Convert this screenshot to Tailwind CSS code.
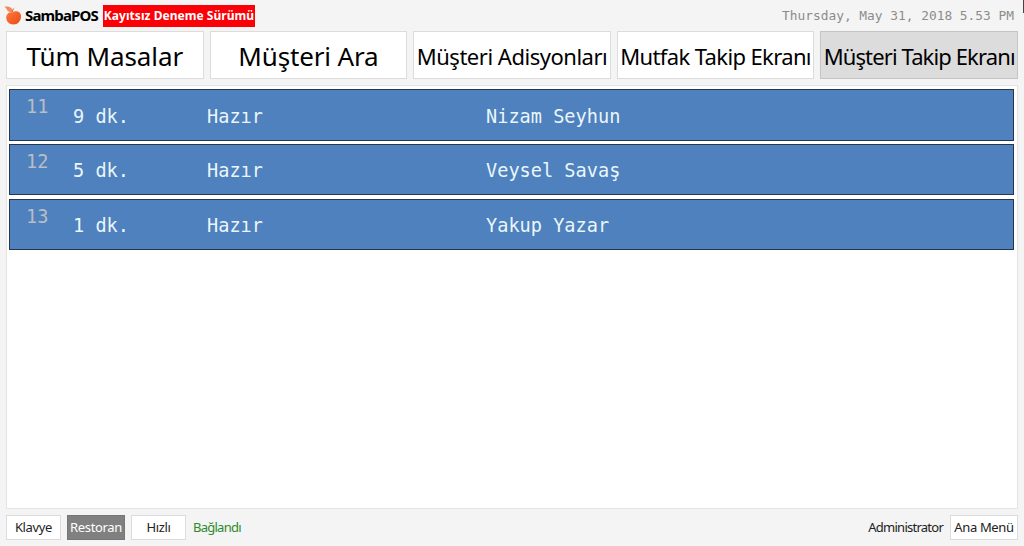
<!DOCTYPE html>
<html lang="tr">
  <head>
    <meta charset="UTF-8" />
    <meta name="viewport" content="width=device-width, initial-scale=1.0" />
    <title>SambaPOS | Müşteri Takip Ekranı</title>
    <script src="https://cdn.jsdelivr.net/npm/@tailwindcss/browser@4"></script>
  </head>
  <body class="bg-[#f4f4f4] font-['Noto_Sans',sans-serif] text-black">
    <div class="relative flex h-[546px] w-[1024px] flex-col overflow-hidden px-1.5">
      <div class="absolute right-0 top-0 h-[13px] w-px bg-[#444]"></div>

      <header class="flex h-[31px] shrink-0 items-center justify-between pr-1 whitespace-nowrap">
        <div class="flex items-center">
          <svg class="-ml-0.5 h-5 w-[18px]" viewBox="0 0 18 20">
            <defs>
              <linearGradient id="meyve" x1="0" y1="0" x2="1" y2="1">
                <stop offset="0" stop-color="#ff7a3c" />
                <stop offset="1" stop-color="#ea4a18" />
              </linearGradient>
            </defs>
            <path d="M8.500 6.500C11 4.300 17.200 4.800 17 10.500c-.2 4.500-3.200 8-7.500 8C5 18.500 2 15 2.200 11 2.400 7.500 5.500 5.200 8.500 6.500Z" fill="url(#meyve)" />
            <path d="M0.300 .8C4-.2 8.600 1 9 6 5.500 6.600 3.200 5 2.500 3 2 2 1.300 1.500.3.800Z" fill="#f4895c" />
            <path d="M8.600 6.200C8.300 4.500 9 3 10.200 2.200" stroke="#d9603a" fill="none" />
          </svg>
          <span class="ml-[3px] w-[78px] text-[15px] font-bold tracking-[-0.850px]">SambaPOS</span>
          <span class="flex h-[22px] w-[152px] items-center justify-center bg-[#fb0007] pt-px text-[12px] font-bold tracking-[0.040px] text-white">Kayıtsız Deneme Sürümü</span>
        </div>
        <span class="font-['DejaVu_Sans_Mono',monospace] text-[12.850px] text-[#8c8c8c]">Thursday, May 31, 2018 5.53 PM</span>
      </header>

      <nav class="grid h-12 shrink-0 grid-cols-5 gap-x-1.5 whitespace-nowrap">
        <button class="border border-[#dcdcdc] bg-white pt-[3px] text-[26px] tracking-[-0.080px]">Tüm Masalar</button>
        <button class="border border-[#dcdcdc] bg-white pt-[3px] text-[26px] tracking-[-0.150px]">Müşteri Ara</button>
        <button class="border border-[#dcdcdc] bg-white pt-[3px] text-[22px] tracking-[-0.480px]">Müşteri Adisyonları</button>
        <button class="border border-[#dcdcdc] bg-white pt-0.5 text-[22px] tracking-[-0.630px]">Mutfak Takip Ekranı</button>
        <button class="border border-[#c4c4c4] bg-[#dcdcdc] pt-0.5 text-[22px] tracking-[-0.880px]">Müşteri Takip Ekranı</button>
      </nav>

      <main class="mt-1.5 flex h-[424px] shrink-0 flex-col gap-[3px] border border-[#e4e4e4] bg-white px-0.5 pt-[3px] font-['DejaVu_Sans_Mono',monospace] text-[18.600px] leading-6 text-[#eaf6fa]">
        <div class="grid h-[52px] w-[1005px] grid-cols-[47px_133px_279px_1fr] border border-[#25364d] bg-[#4e81bd] pl-4">
          <span class="pt-[5px] text-[#b9bdc4]">11</span>
          <span class="pt-[15px]">9 dk.</span>
          <span class="pt-[15px] pl-px">Hazır</span>
          <span class="pt-[15px] pl-px">Nizam Seyhun</span>
        </div>
        <div class="grid h-[51px] w-[1005px] grid-cols-[47px_133px_279px_1fr] border border-[#25364d] bg-[#4e81bd] pl-4">
          <span class="pt-[5px] text-[#b9bdc4]">12</span>
          <span class="pt-3.5">5 dk.</span>
          <span class="pt-3.5 pl-px">Hazır</span>
          <span class="pt-3.5 pl-px">Veysel Savaş</span>
        </div>
        <div class="mt-px grid h-[51px] w-[1005px] grid-cols-[47px_133px_279px_1fr] border border-[#25364d] bg-[#4e81bd] pl-4">
          <span class="pt-[5px] text-[#b9bdc4]">13</span>
          <span class="pt-3.5">1 dk.</span>
          <span class="pt-3.5 pl-px">Hazır</span>
          <span class="pt-3.5 pl-px">Yakup Yazar</span>
        </div>
      </main>

      <footer class="mt-1.5 flex h-[25px] shrink-0 items-stretch justify-between whitespace-nowrap text-[13px] tracking-[-0.350px] text-[#222]">
        <div class="flex">
          <button class="w-[55px] border border-[#dcdcdc] bg-white">Klavye</button>
          <button class="ml-1.5 w-[58px] border border-[#767676] bg-[#808080] text-white">Restoran</button>
          <button class="ml-1.5 w-[55px] border border-[#dcdcdc] bg-white">Hızlı</button>
          <span class="ml-[7px] self-center tracking-[-0.750px] text-[#2c8a2c]">Bağlandı</span>
        </div>
        <div class="flex">
          <span class="mr-[7px] self-center tracking-[-0.750px]">Administrator</span>
          <button class="w-[68px] border border-[#dcdcdc] bg-white">Ana Menü</button>
        </div>
      </footer>
    </div>
  </body>
</html>
